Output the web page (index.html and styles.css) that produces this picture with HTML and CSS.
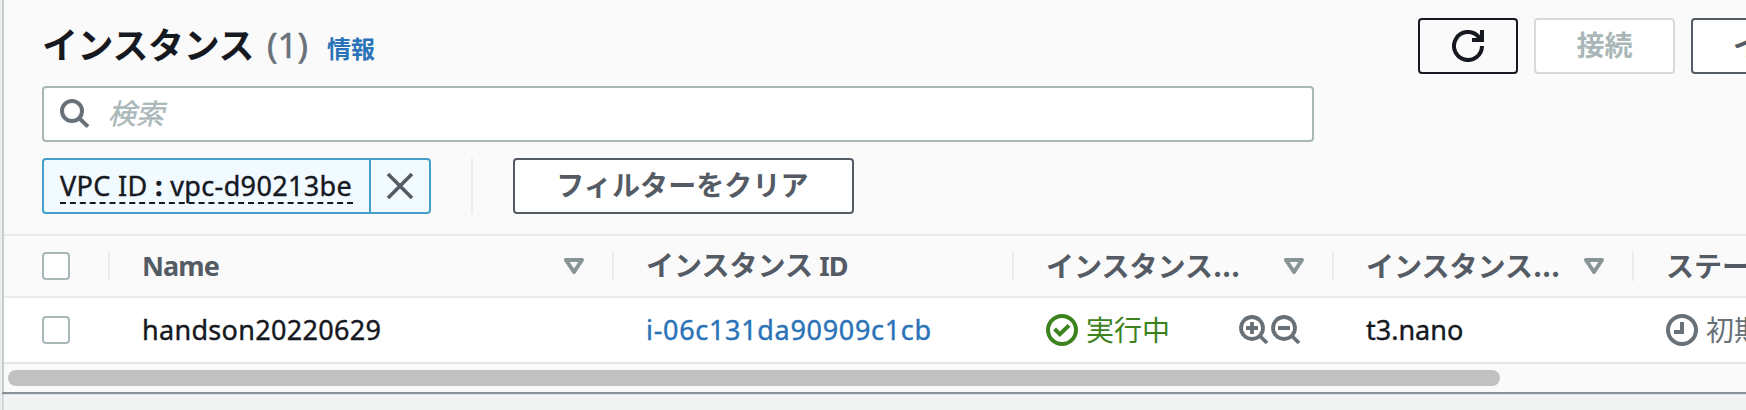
FILE: index.html
```html
<!DOCTYPE html>
<html lang="ja">
<head>
<meta charset="utf-8">
<title>インスタンス</title>
<link rel="stylesheet" href="styles.css">
</head>
<body>
<main class="panel">
  <header class="toolbar">
    <div class="title-row">
      <h1 class="title">インスタンス</h1>
      <span class="count">(1)</span>
      <a class="info">情報</a>
      <div class="actions">
        <button class="btn btn-refresh" aria-label="更新">
          <svg width="32" height="32" viewBox="0 0 32 32" fill="none" stroke="currentColor" stroke-width="4"><path d="M30 16a14 14 0 1 1-4-9.8L30 11"/><path d="M30 0v10H20"/></svg>
        </button>
        <button class="btn btn-connect">接続</button>
        <button class="btn btn-state">イ</button>
      </div>
    </div>
    <div class="search">
      <svg width="30" height="30" viewBox="0 0 30 30" fill="none" stroke="currentColor" stroke-width="4"><circle cx="12" cy="12" r="10"/><path d="M19 19l9 8.6"/></svg>
      <span class="placeholder">検索</span>
    </div>
    <div class="filters">
      <div class="token">
        <span class="token-label"><span class="token-text">VPC ID <b>:</b> vpc-d90213be</span></span>
        <span class="token-close"><svg width="28" height="28" viewBox="0 0 28 28" fill="none" stroke="currentColor" stroke-width="3.6"><path d="M2 2l24 24M26 2L2 26"/></svg></span>
      </div>
      <span class="separator"></span>
      <button class="btn btn-clear">フィルターをクリア</button>
    </div>
  </header>
  <section class="table">
    <div class="row head">
      <div class="cell select"><span class="checkbox"></span></div>
      <div class="cell"><span class="latin-bold">Name</span><svg class="sort" width="20" height="16" viewBox="0 0 20 16"><path d="M2 2h16l-8 12z"/></svg></div>
      <div class="cell"><span class="label">インスタンス <span class="latin-bold">ID</span></span></div>
      <div class="cell"><span class="label">インスタンス...</span><svg class="sort" width="20" height="16" viewBox="0 0 20 16"><path d="M2 2h16l-8 12z"/></svg></div>
      <div class="cell"><span class="label">インスタンス...</span><svg class="sort" width="20" height="16" viewBox="0 0 20 16"><path d="M2 2h16l-8 12z"/></svg></div>
      <div class="cell last"><span class="label">ステー</span></div>
    </div>
    <div class="row body">
      <div class="cell select"><span class="checkbox"></span></div>
      <div class="cell"><span class="name">handson20220629</span></div>
      <div class="cell"><a class="link">i-06c131da90909c1cb</a></div>
      <div class="cell state">
        <svg width="32" height="32" viewBox="0 0 32 32" fill="none" stroke="currentColor" stroke-width="4"><circle cx="16" cy="16" r="14"/><path d="M8.6 15l5.3 5.3L23 11.4"/></svg>
        <span class="running">実行中</span>
        <span class="zooms">
          <svg width="32" height="30" viewBox="0 0 32 30" fill="none" stroke="currentColor" stroke-width="3.8"><circle cx="13" cy="13" r="11"/><path d="M21 21l7 7M7 13h12M13 7v12"/></svg><svg width="32" height="30" viewBox="0 0 32 30" fill="none" stroke="currentColor" stroke-width="3.8"><circle cx="13" cy="13" r="11"/><path d="M21 21l7 7M7 13h12"/></svg>
        </span>
      </div>
      <div class="cell"><span class="type">t3.nano</span></div>
      <div class="cell last pending">
        <svg width="32" height="32" viewBox="0 0 32 32" fill="none" stroke="currentColor" stroke-width="4"><circle cx="16" cy="16" r="14"/><path d="M16 8v10H8"/></svg>
        <span>初期</span>
      </div>
    </div>
  </section>
  <div class="scrollbar"><div class="thumb"></div></div>
</main>
</body>
</html>
```
FILE: styles.css
```css
* { box-sizing: border-box; }
body {
  margin: 0;
  height: 410px;
  overflow: hidden;
  background: linear-gradient(90deg, #eaeded 2px, #c9cdcf 2px, #dfe2e3 4px, #f2f3f3 4px);
  font-family: "Noto Sans", "Noto Sans CJK JP", sans-serif;
  font-size: 27px;
  line-height: 36px;
  color: #16191f;
}
svg { display: block; flex: none; }
.panel {
  width: 1800px;
  height: 392px;
  margin-left: 2px;
  border-left: 2px solid #c9cdcf;
  background: #fafafa;
  box-shadow: 0 1px 1px 1px #879196;
  clip-path: inset(0 0 -3px 0);
}
.toolbar { height: 234px; padding: 18px 0 0 38px; }
.title-row { display: flex; height: 56px; align-items: center; white-space: nowrap; }
.title {
  flex: none;
  margin: 0;
  width: 225px;
  padding-bottom: 7px;
  font: bold 36px/52px "Noto Sans CJK JP", sans-serif;
  letter-spacing: -0.4px;
}
.count {
  flex: none;
  width: 60px;
  padding-bottom: 2px;
  font-size: 35px;
  line-height: 52px;
  color: #687078;
  -webkit-text-stroke: 0.5px;
}
.info {
  flex: none;
  width: 1091px;
  padding-top: 4px;
  font: bold 24px/36px "Noto Sans CJK JP", sans-serif;
  color: #2a73b8;
}
.actions { display: flex; gap: 16px; flex: none; }
.btn {
  display: flex;
  align-items: center;
  justify-content: center;
  flex: none;
  height: 56px;
  padding: 0 0 4px;
  border: 2px solid #545b64;
  border-radius: 4px;
  background: #fff;
  color: #545b64;
  font: bold 28px/42px "Noto Sans CJK JP", sans-serif;
  white-space: nowrap;
}
.btn-refresh { width: 100px; padding: 0; border-color: #16191f; background: #fafafa; color: #16191f; }
.btn-connect { width: 141px; border-color: #d5dbdb; color: #aab7b8; }
.btn-state { width: 320px; justify-content: flex-start; padding-left: 40px; }
.search {
  display: flex;
  align-items: center;
  gap: 18px;
  width: 1272px;
  height: 56px;
  margin-top: 12px;
  padding: 0 16px;
  border: 2px solid #aab7b8;
  border-radius: 4px;
  background: #fff;
  color: #687078;
}
.placeholder {
  padding-bottom: 5px;
  font: italic 28px/42px "Noto Sans CJK JP", sans-serif;
  color: #aab7b8;
  -webkit-text-stroke: 0.4px;
}
.filters { display: flex; margin-top: 16px; }
.token {
  display: flex;
  width: 389px;
  height: 56px;
  border: 2px solid #44a0c8;
  border-radius: 4px;
  background: #f1faff;
}
.token-label { width: 327px; padding: 8px 0 0 16px; border-right: 2px solid #44a0c8; white-space: nowrap; }
.token-text {
  display: block;
  width: 293px;
  height: 36px;
  border-bottom: 2px dashed #16191f;
  letter-spacing: 0.35px;
  -webkit-text-stroke: 0.4px;
}
.token-close { display: flex; flex: 1; align-items: center; justify-content: center; color: #545b64; }
.separator { width: 2px; margin: 0 40px; background: #eaeded; }
.btn-clear { width: 341px; padding-right: 2px; letter-spacing: 0.1px; }
.row {
  display: grid;
  grid-template-columns: 106px 504px 400px 320px 300px 170px;
  border-top: 2px solid #eaeaea;
}
.head { height: 62px; font: bold 28px/42px "Noto Sans CJK JP", sans-serif; color: #545b64; }
.body { height: 66px; background: #fff; }
.cell { display: flex; align-items: center; padding-left: 32px; white-space: nowrap; }
.select { padding-left: 38px; }
.head .cell {
  justify-content: space-between;
  padding-right: 30px;
  background: linear-gradient(#eaeded, #eaeded) right 15px / 2px 30px no-repeat;
}
.head .last { background: none; }
.label { padding-bottom: 3px; }
.checkbox { width: 28px; height: 28px; border: 2px solid #aab7b8; border-radius: 4px; background: #fff; }
.latin-bold { font-family: "Noto Sans", sans-serif; font-size: 27px; letter-spacing: -0.9px; }
.sort { fill: none; stroke: #879596; stroke-width: 4; stroke-linejoin: round; }
.name, .type, .link { -webkit-text-stroke: 0.4px; }
.name { letter-spacing: 0.3px; }
.link { color: #2a73b8; letter-spacing: 0.68px; }
.state { color: #3c831e; }
.running, .pending span {
  margin-left: 8px;
  padding-bottom: 2px;
  font: 28px/42px "Noto Sans CJK JP", sans-serif;
}
.zooms { display: flex; margin-left: 69px; color: #687078; }
.pending { color: #687078; }
.scrollbar { height: 30px; padding: 6px 0 0 4px; border-top: 2px solid #e4e6e7; }
.thumb { width: 1492px; height: 16px; border-radius: 8px; background: #c1c1c1; }
```
